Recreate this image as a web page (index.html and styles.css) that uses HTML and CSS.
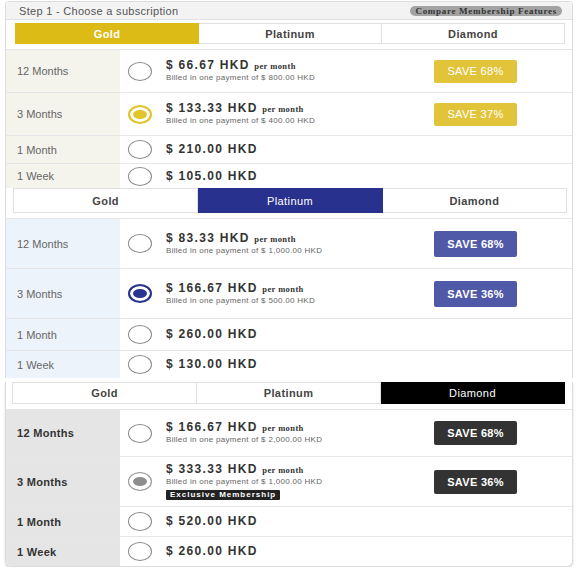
FILE: index.html
```html
<!DOCTYPE html>
<html>
<head>
<meta charset="utf-8">
<link rel="stylesheet" href="styles.css">
</head>
<body>
<div class="page">

  <section class="plan plan-gold">
    <div class="head">
      <span class="step">Step 1 - Choose a subscription</span>
      <span class="compare">Compare Membership Features</span>
    </div>
    <div class="tabs">
      <div class="tab active">Gold</div>
      <div class="tab">Platinum</div>
      <div class="tab">Diamond</div>
    </div>
    <div class="row h1">
      <div class="label">12 Months</div>
      <div class="radio-cell"><span class="radio"></span></div>
      <div class="price"><div class="amt">$ 66.67 HKD <span class="per">per month</span></div><div class="billed">Billed in one payment of $ 800.00 HKD</div></div>
      <div class="save-cell"><span class="save">SAVE 68%</span></div>
    </div>
    <div class="row h1">
      <div class="label">3 Months</div>
      <div class="radio-cell"><span class="radio sel"></span></div>
      <div class="price"><div class="amt">$ 133.33 HKD <span class="per">per month</span></div><div class="billed">Billed in one payment of $ 400.00 HKD</div></div>
      <div class="save-cell"><span class="save">SAVE 37%</span></div>
    </div>
    <div class="row h2">
      <div class="label">1 Month</div>
      <div class="radio-cell"><span class="radio"></span></div>
      <div class="price"><div class="amt">$ 210.00 HKD</div></div>
      <div class="save-cell"></div>
    </div>
    <div class="row h3">
      <div class="label">1 Week</div>
      <div class="radio-cell"><span class="radio"></span></div>
      <div class="price"><div class="amt">$ 105.00 HKD</div></div>
      <div class="save-cell"></div>
    </div>
  </section>

  <section class="plan plan-plat">
    <div class="tabs">
      <div class="tab">Gold</div>
      <div class="tab active">Platinum</div>
      <div class="tab">Diamond</div>
    </div>
    <div class="row h1">
      <div class="label">12 Months</div>
      <div class="radio-cell"><span class="radio"></span></div>
      <div class="price"><div class="amt">$ 83.33 HKD <span class="per">per month</span></div><div class="billed">Billed in one payment of $ 1,000.00 HKD</div></div>
      <div class="save-cell"><span class="save">SAVE 68%</span></div>
    </div>
    <div class="row h1">
      <div class="label">3 Months</div>
      <div class="radio-cell"><span class="radio sel"></span></div>
      <div class="price"><div class="amt">$ 166.67 HKD <span class="per">per month</span></div><div class="billed">Billed in one payment of $ 500.00 HKD</div></div>
      <div class="save-cell"><span class="save">SAVE 36%</span></div>
    </div>
    <div class="row h2">
      <div class="label">1 Month</div>
      <div class="radio-cell"><span class="radio"></span></div>
      <div class="price"><div class="amt">$ 260.00 HKD</div></div>
      <div class="save-cell"></div>
    </div>
    <div class="row h3">
      <div class="label">1 Week</div>
      <div class="radio-cell"><span class="radio"></span></div>
      <div class="price"><div class="amt">$ 130.00 HKD</div></div>
      <div class="save-cell"></div>
    </div>
  </section>

  <section class="plan plan-dia">
    <div class="tabs">
      <div class="tab">Gold</div>
      <div class="tab">Platinum</div>
      <div class="tab active">Diamond</div>
    </div>
    <div class="row h0">
      <div class="label">12 Months</div>
      <div class="radio-cell"><span class="radio"></span></div>
      <div class="price"><div class="amt">$ 166.67 HKD <span class="per">per month</span></div><div class="billed">Billed in one payment of $ 2,000.00 HKD</div></div>
      <div class="save-cell"><span class="save">SAVE 68%</span></div>
    </div>
    <div class="row h1">
      <div class="label">3 Months</div>
      <div class="radio-cell"><span class="radio sel"></span></div>
      <div class="price"><div class="amt">$ 333.33 HKD <span class="per">per month</span></div><div class="billed">Billed in one payment of $ 1,000.00 HKD</div><div class="badge">Exclusive Membership</div></div>
      <div class="save-cell"><span class="save">SAVE 36%</span></div>
    </div>
    <div class="row h2">
      <div class="label">1 Month</div>
      <div class="radio-cell"><span class="radio"></span></div>
      <div class="price"><div class="amt">$ 520.00 HKD</div></div>
      <div class="save-cell"></div>
    </div>
    <div class="row h2">
      <div class="label">1 Week</div>
      <div class="radio-cell"><span class="radio"></span></div>
      <div class="price"><div class="amt">$ 260.00 HKD</div></div>
      <div class="save-cell"></div>
    </div>
  </section>

</div>
</body>
</html>
```

FILE: styles.css
```css
*, *::before, *::after {
  box-sizing: border-box;
}

html, body {
  margin: 0;
  padding: 0;
  background: #ffffff;
}

body {
  font-family: "Liberation Sans", Arial, sans-serif;
  color: #333;
}

.page {
  width: 573px;
  padding: 1px 0 0 5px;
}

.plan {
  border-left: 1px solid #dcdcdc;
  border-right: 1px solid #dcdcdc;
  background: #fff;
}

.plan-gold {
  border-top: 1px solid #dcdcdc;
  border-radius: 4px 4px 0 0;
}

.plan-dia {
  margin-top: 4px;
  border-bottom: 1px solid #dcdcdc;
  border-radius: 0 0 6px 6px;
  box-shadow: 0 2px 3px rgba(0, 0, 0, 0.12);
  overflow: hidden;
}

.head {
  height: 18px;
  background: #f3f3f3;
  border-bottom: 1px solid #e2e2e2;
  display: flex;
  align-items: center;
  justify-content: space-between;
  padding: 0 10px 0 13px;
}

.step {
  font-size: 11px;
  color: #555;
  letter-spacing: 0.3px;
}

.compare {
  background: #a3a3a3;
  color: #333;
  font-family: "Liberation Serif", serif;
  font-weight: bold;
  font-size: 9px;
  letter-spacing: 0.7px;
  padding: 0 5px;
  line-height: 10px;
  height: 10px;
  border-radius: 6px;
}

.tabs {
  display: flex;
}

.plan-gold .tabs {
  padding: 3px 7px 5px 9px;
}

.plan-plat .tabs {
  padding: 0 5px 5px 7px;
}

.plan-dia .tabs {
  padding: 0 7px 5px 6px;
}

.tab {
  flex: 1;
  height: 21px;
  border: 1px solid #e0e0e0;
  border-left: none;
  display: flex;
  align-items: center;
  justify-content: center;
  font-size: 11px;
  font-weight: bold;
  letter-spacing: 0.4px;
  color: #444;
}

.tab:first-child {
  border-left: 1px solid #e0e0e0;
}

.plan-plat .tab {
  height: 25px;
}

.plan-dia .tab {
  height: 22px;
}

.plan-gold .tab.active {
  background: #dcbb17;
  border-color: #dcbb17;
  color: #fff;
}

.plan-plat .tab.active {
  background: #29318f;
  border-color: #29318f;
  color: #fff;
  font-weight: normal;
}

.plan-dia .tab.active {
  background: #000;
  border-color: #000;
  color: #fff;
  font-weight: normal;
}

.row {
  display: grid;
  grid-template-columns: 114px 46px 268px 1fr;
  border-top: 1px solid #e6e6e6;
}

.row.h0 { height: 47px; }
.row.h1 { height: 43px; }
.row.h2 { height: 28px; }
.row.h3 { height: 25px; }

.plan-plat .row.h1 { height: 50px; }
.plan-plat .row.h2 { height: 32px; }
.plan-plat .row.h3 { height: 28px; }

.plan-dia .row.h1 { height: 50px; }
.plan-dia .row.h2 { height: 30px; }

.label {
  display: flex;
  align-items: center;
  padding-left: 11px;
  font-size: 11px;
  color: #666;
}

.plan-gold .label { background: #f5f4ec; }
.plan-plat .label { background: #edf3fb; }
.plan-dia .label {
  background: #e5e5e5;
  font-weight: bold;
  color: #333;
  letter-spacing: 0.3px;
}

.radio-cell {
  display: flex;
  align-items: center;
  padding-left: 8px;
}

.radio {
  width: 24px;
  height: 19px;
  border: 1px solid #8a8a8a;
  border-radius: 50%;
  background: #fff;
}

.radio.sel {
  border-width: 2px;
  box-shadow: inset 0 0 0 3px #fff;
}

.plan-gold .radio.sel {
  border-color: #e2c42c;
  background: #e2c42c;
}

.plan-plat .radio.sel {
  border-color: #2b3590;
  background: #2b3590;
}

.plan-dia .radio.sel {
  border-color: #9a9a9a;
  border-width: 1px;
  background: #8e8e8e;
  box-shadow: inset 0 0 0 4px #fff;
}

.price {
  display: flex;
  flex-direction: column;
  justify-content: center;
}

.amt {
  font-size: 12px;
  font-weight: bold;
  letter-spacing: 1.3px;
  color: #333;
  line-height: 13px;
}

.per {
  font-family: "Liberation Serif", serif;
  font-size: 8.5px;
  letter-spacing: 0.4px;
}

.billed {
  font-size: 8px;
  color: #666;
  letter-spacing: 0.3px;
  line-height: 10px;
}

.badge {
  align-self: flex-start;
  margin-top: 3px;
  background: #222;
  color: #fff;
  font-size: 8px;
  font-weight: bold;
  letter-spacing: 1px;
  line-height: 10px;
  padding: 0 4px;
  border-radius: 1px;
}

.save-cell {
  display: flex;
  align-items: center;
}

.save {
  width: 83px;
  height: 23px;
  display: flex;
  align-items: center;
  justify-content: center;
  border-radius: 2px;
  color: #fff;
  font-size: 11px;
  letter-spacing: 0.3px;
}

.plan-gold .save {
  background: #e2c43b;
}

.plan-plat .save {
  background: #5058a8;
  font-weight: bold;
  height: 26px;
}

.plan-dia .save {
  background: #333;
  font-weight: bold;
  height: 24px;
}
```
